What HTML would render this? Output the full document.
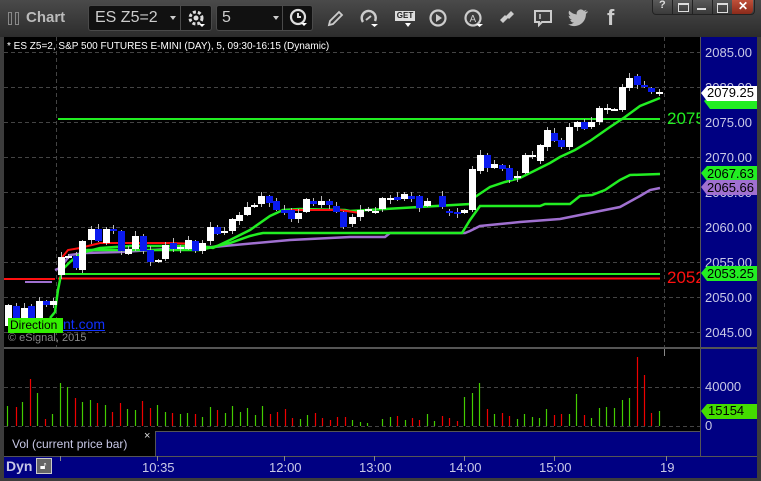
<!DOCTYPE html>
<html><head><meta charset="utf-8">
<style>
html,body{margin:0;padding:0;background:#3c3c3c;}
body{width:761px;height:481px;position:relative;overflow:hidden;font-family:"Liberation Sans",Arial,sans-serif;}
.abs{position:absolute;}
#tb{left:0;top:0;width:761px;height:37px;background:linear-gradient(#4a4a4a,#2c2c2c);}
.box{position:absolute;top:5px;height:26px;background:#111;border:1px solid #4a4a4a;border-radius:3px;box-sizing:border-box;}
.ax{color:#c8c8e6;font-size:13px;position:absolute;}
</style></head><body>
<div id="tb" class="abs">
  <div class="abs" style="left:8px;top:12px;width:4px;height:13px;border:1px solid #888;box-sizing:border-box"></div>
  <div class="abs" style="left:15px;top:12px;width:4px;height:13px;border:1px solid #888;box-sizing:border-box"></div>
  <div class="abs" style="left:26px;top:9px;color:#bbb;font-weight:bold;font-size:15px">Chart</div>
  <div class="box" style="left:88px;width:124px"></div>
  <div class="abs" style="left:180px;top:5px;width:1px;height:26px;background:#4a4a4a"></div>
  <div class="abs" style="left:95px;top:9px;color:#ccc;font-size:16px">ES Z5=2</div>
  <div class="abs" style="left:170px;top:16px;border:3px solid transparent;border-top:4px solid #ccc"></div>
  <svg class="abs" style="left:186px;top:8px" width="20" height="20" viewBox="0 0 20 20"><circle cx="10" cy="10" r="6" fill="none" stroke="#ddd" stroke-width="3" stroke-dasharray="3 2"/><circle cx="10" cy="10" r="2.5" fill="#ddd"/><path d="M13 16h6l-3 3z" fill="#fff"/></svg>
  <div class="box" style="left:216px;width:97px"></div>
  <div class="abs" style="left:282px;top:5px;width:1px;height:26px;background:#4a4a4a"></div>
  <div class="abs" style="left:222px;top:9px;color:#ccc;font-size:16px">5</div>
  <div class="abs" style="left:273px;top:16px;border:3px solid transparent;border-top:4px solid #ccc"></div>
  <svg class="abs" style="left:288px;top:8px" width="20" height="20" viewBox="0 0 20 20"><circle cx="10" cy="9" r="7" fill="none" stroke="#ddd" stroke-width="2.2"/><path d="M10 5v4h3" fill="none" stroke="#ddd" stroke-width="2"/><path d="M13 15h6l-3 3z" fill="#fff"/></svg>
  <svg class="abs" style="left:325px;top:8px" width="20" height="20" viewBox="0 0 20 20"><path d="M4 17l1-4 9-9 3 3-9 9z" fill="none" stroke="#ccc" stroke-width="1.8"/></svg>
  <svg class="abs" style="left:358px;top:7px" width="22" height="22" viewBox="0 0 22 22"><path d="M5 15A7 7 0 1 1 17 14" fill="none" stroke="#ccc" stroke-width="2.4"/><path d="M8 13l5-4" stroke="#ccc" stroke-width="2"/><path d="M13 17h7l-3.5 3z" fill="#fff"/></svg>
  <div class="abs" style="left:395px;top:11px;width:20px;height:10px;background:#ddd;color:#222;font-size:8px;font-weight:bold;line-height:10px;text-align:center">GET</div>
  <div class="abs" style="left:405px;top:23px;border:3px solid transparent;border-top:4px solid #fff"></div>
  <svg class="abs" style="left:428px;top:8px" width="20" height="20" viewBox="0 0 20 20"><circle cx="10" cy="10" r="7.5" fill="none" stroke="#ccc" stroke-width="2.2"/><path d="M8 6v8l6-4z" fill="#ccc"/></svg>
  <svg class="abs" style="left:463px;top:7px" width="22" height="22" viewBox="0 0 22 22"><circle cx="10" cy="11" r="7.5" fill="none" stroke="#ccc" stroke-width="2.2"/><text x="6.5" y="15" font-size="10" fill="#ccc" font-family="Liberation Sans">A</text><path d="M13 17h7l-3.5 3z" fill="#fff"/></svg>
  <svg class="abs" style="left:497px;top:8px" width="20" height="20" viewBox="0 0 20 20"><path d="M3 12l5-5 3 3-5 5zM9 8l5-5 3 3-5 5z" fill="#ccc"/></svg>
  <svg class="abs" style="left:533px;top:8px" width="20" height="20" viewBox="0 0 20 20"><path d="M2 3h16v11h-9l-3 3v-3h-4z" fill="none" stroke="#ccc" stroke-width="2"/><path d="M7 6v5" stroke="#ccc" stroke-width="1.5"/></svg>
  <svg class="abs" style="left:568px;top:9px" width="20" height="18" viewBox="0 0 24 20"><path d="M23 2c-1 .5-2 .7-3 .8 1-.6 2-1.6 2.2-2.7-1 .6-2 1-3.2 1.2A5 5 0 0 0 10.5 5.8 14 14 0 0 1 1.5 1.2a5 5 0 0 0 1.5 6.6c-.8 0-1.6-.3-2.2-.6 0 2.4 1.7 4.4 4 4.9-.7.2-1.500.2-2.2.1a5 5 0 0 0 4.600 3.4A10 10 0 0 1 0 17.5 14 14 0 0 0 7.5 19.7c9 0 14-7.5 14-14v-.6c1-.7 1.8-1.6 2.5-2.6z" fill="#bbb"/></svg>
  <div class="abs" style="left:607px;top:5px;color:#ccc;font-weight:bold;font-size:22px;font-family:'Liberation Sans'">f</div>
  <div class="abs" style="left:652px;top:0px;width:101px;height:14px;background:linear-gradient(#5a5a5a,#3a3a3a);border:1px solid #222;border-top:none;border-radius:0 0 4px 4px"></div>
  <div class="abs" style="left:659px;top:-1px;color:#ddd;font-size:11px;font-weight:bold">?</div>
  <div class="abs" style="left:672px;top:0;width:1px;height:14px;background:#222"></div>
  <div class="abs" style="left:678px;top:3px;width:9px;height:6px;border:1px solid #ddd;border-top-width:2px"></div>
  <div class="abs" style="left:692px;top:0;width:1px;height:14px;background:#222"></div>
  <div class="abs" style="left:697px;top:8px;width:9px;height:2px;background:#ddd"></div>
  <div class="abs" style="left:712px;top:0;width:1px;height:14px;background:#222"></div>
  <div class="abs" style="left:717px;top:3px;width:9px;height:7px;border:1px solid #ddd;border-top-width:2px"></div>
  <div class="abs" style="left:732px;top:0;width:21px;height:14px;background:linear-gradient(#c0503a,#8a2a1a);border-radius:0 0 4px 0"></div>
  <div class="abs" style="left:738px;top:-1px;color:#fff;font-size:12px;font-weight:bold">✕</div>
</div>

<div class="abs" style="left:4px;top:37px;width:696px;height:310px;background:#000"></div>
<div class="abs" style="left:700px;top:37px;width:57px;height:441px;background:#000082"></div>
<div class="abs" style="left:4px;top:347px;width:753px;height:2px;background:#555"></div>
<div class="abs" style="left:4px;top:349px;width:696px;height:82px;background:#000"></div>
<div class="abs" style="left:4px;top:431px;width:151px;height:25px;background:#000"></div>
<div class="abs" style="left:155px;top:431px;width:545px;height:25px;background:#000082;border-top:1px solid #555;border-left:1px solid #555;box-sizing:border-box"></div>
<div class="abs" style="left:4px;top:456px;width:753px;height:22px;background:#000082;border-top:1px solid #555;box-sizing:border-box"></div>
<div class="abs" style="left:700px;top:37px;width:1px;height:419px;background:#555"></div>

<svg id="ch" class="abs" style="left:0;top:0" width="761" height="481"></svg>

<div class="abs" style="left:7px;top:41px;color:#fff;font-size:10px">* ES Z5=2, S&amp;P 500 FUTURES E-MINI (DAY), 5, 09:30-16:15 (Dynamic)</div>
<div class="abs" style="left:8px;top:318px;width:55px;height:15px;background:#33ee00"></div>
<div class="abs" style="left:10px;top:318px;color:#000;font-size:12px">Direction</div>
<div class="abs" style="left:63px;top:316px;color:#1030ff;font-size:14px;text-decoration:underline">nt.com</div>
<div class="abs" style="left:8px;top:332px;color:#888;font-size:11px">© eSignal, 2015</div>
<div class="abs" style="left:667px;top:109px;width:33px;overflow:hidden;color:#22ee22;font-size:17px;white-space:nowrap">2075</div>
<div class="abs" style="left:667px;top:268px;width:33px;overflow:hidden;color:#ff1010;font-size:17px;white-space:nowrap">2052</div>

<div class="ax" style="left:705px;top:45px">2085.00</div>
<div class="ax" style="left:705px;top:80px">2080.00</div>
<div class="ax" style="left:705px;top:115px">2075.00</div>
<div class="ax" style="left:705px;top:150px">2070.00</div>
<div class="ax" style="left:705px;top:185px">2065.00</div>
<div class="ax" style="left:705px;top:220px">2060.00</div>
<div class="ax" style="left:705px;top:255px">2055.00</div>
<div class="ax" style="left:705px;top:290px">2050.00</div>
<div class="ax" style="left:705px;top:325px">2045.00</div>

<svg class="abs" style="left:700px;top:80px" width="57" height="120">
 <path d="M4 21l6-6h47v14h-47z" fill="#22ee22"/>
 <path d="M1 13l6-7h50v15h-50z" fill="#fff"/>
 <path d="M1 93l6-7h50v15h-50z" fill="#22ee22"/>
 <path d="M1 107l6-7h50v15h-50z" fill="#a070d0"/>
</svg>
<div class="abs" style="left:707px;top:85px;color:#000;font-size:13px">2079.25</div>
<div class="abs" style="left:707px;top:166px;color:#000;font-size:13px">2067.63</div>
<div class="abs" style="left:707px;top:180px;color:#000;font-size:13px">2065.66</div>
<svg class="abs" style="left:700px;top:265px" width="57" height="16"><path d="M1 8l6-7h50v15h-50z" fill="#22ee22"/></svg>
<div class="abs" style="left:707px;top:266px;color:#000;font-size:13px">2053.25</div>

<div class="ax" style="left:705px;top:379px">40000</div>
<div class="ax" style="left:705px;top:418px">0</div>
<svg class="abs" style="left:700px;top:403px" width="57" height="16"><path d="M1 8l6-7h50v15h-50z" fill="#44dd00"/></svg>
<div class="abs" style="left:708px;top:403px;color:#000;font-size:13px">15154</div>

<div class="abs" style="left:12px;top:437px;color:#c8c8e6;font-size:12px">Vol (current price bar)</div>
<div class="abs" style="left:144px;top:430px;color:#ddd;font-size:11px">×</div>

<div class="abs" style="left:6px;top:458px;color:#c8c8e6;font-size:14px;font-weight:bold">Dyn</div>
<div class="abs" style="left:36px;top:458px;width:16px;height:16px;background:#666;border:1px solid #ccc;box-sizing:border-box"></div>
<div class="abs" style="left:40px;top:461px;color:#fff;font-size:10px">🔓︎</div>
<div class="ax" style="left:142px;top:460px">10:35</div>
<div class="ax" style="left:269px;top:460px">12:00</div>
<div class="ax" style="left:359px;top:460px">13:00</div>
<div class="ax" style="left:449px;top:460px">14:00</div>
<div class="ax" style="left:539px;top:460px">15:00</div>
<div class="ax" style="left:660px;top:460px">19</div>

<script>
var s=document.getElementById('ch'),h='';
function L(x1,y1,x2,y2,c,w,d){h+='<line x1="'+x1+'" y1="'+y1+'" x2="'+x2+'" y2="'+y2+'" stroke="'+c+'" stroke-width="'+(w||1)+'"'+(d?' stroke-dasharray="'+d+'"':'')+'/>';}
for(var y=52;y<=332;y+=35)L(4,y+.5,700,y+.5,'#444',1,'4 3');
L(4,387.5,700,387.5,'#444',1,'4 3');L(4,426.5,700,426.5,'#444',1,'4 3');
L(56.5,37,56.5,347,'#444',1,'4 3');L(664.5,37,664.5,347,'#444',1,'4 3');
L(664.5,349,664.5,356,'#888');
[60,157,284,374,464,554,666].forEach(function(x){L(x+.5,456,x+.5,461,'#888');});
function P(pts,c,w){h+='<polyline fill="none" stroke="'+c+'" stroke-width="'+w+'" points="'+pts+'"/>';}
P('4,279 55,279','#ff1010',2);
P('25,282 52,282','#a070d0',2);
P('58,274 660,274','#22ee22',2);
P('58,278.5 660,278.5','#ff1010',2);
P('58,119 660,119','#22ee22',2);
P('55,270 60,268 70,255 85,253 120,252 200,247 213,247 290,240 350,237 385,237 390,233 465,233 470,231 480,226 500,224 520,222 560,219 590,213 620,207 640,196 650,190 660,188','#a070d0',2.5);
P('50,318 55,312 58,290 62,270 70,262 85,250 200,250 230,243 250,236 258,234 263,233 350,233 462,233 470,220 480,206 540,206 545,204 570,204 580,196 592,195 605,190 620,180 630,175 660,174','#22ee22',2.5);
P('60,260 68,250 80,248 100,243 170,243 200,244','#ff1010',2);
P('85,252 100,248 130,246 200,246 213,248 230,240 250,230 270,216 283,210 300,209 345,210 350,211 470,204 475,197 490,187 505,182 520,178 540,168 550,163 560,157 575,150 590,141 610,127 625,117 640,106 660,98','#22ee22',2.5);
P('290,210 340,210 360,213','#ff1010',2);
var C=[[8,305,326,'w'],[16,306,322,'b'],[24,308,322,'w'],[31,306,321,'b'],[39,301,320,'w'],[46,301,305,'b'],[53,301,305,'w'],[61,257,275,'w'],[68,256,258,'w'],[76,256,268,'b'],[82,241,270,'w'],[91,229,240,'w'],[98,229,241,'b'],[106,229,243,'w'],[113,229,231,'b'],[121,231,251,'b'],[128,249,254,'w'],[135,236,249,'w'],[143,236,251,'b'],[150,250,262,'b'],[158,260,262,'w'],[165,245,259,'w'],[173,243,249,'b'],[180,247,249,'w'],[188,240,249,'w'],[195,241,251,'b'],[202,243,251,'w'],[210,227,241,'w'],[217,227,234,'b'],[224,231,233,'w'],[232,219,231,'w'],[239,215,221,'w'],[247,207,215,'w'],[254,205,206,'w'],[261,196,204,'w'],[269,196,203,'b'],[276,201,210,'b'],[284,210,213,'b'],[291,210,219,'b'],[298,213,219,'w'],[306,199,212,'w'],[313,201,204,'b'],[321,201,205,'w'],[329,201,205,'b'],[336,206,212,'b'],[343,212,227,'b'],[352,217,224,'w'],[360,210,217,'w'],[368,209,211,'w'],[375,211,212,'w'],[382,198,209,'w'],[390,198,200,'w'],[397,197,200,'b'],[404,194,199,'w'],[411,196,199,'b'],[419,196,208,'b'],[427,201,206,'w'],[442,196,207,'b'],[449,211,213,'b'],[457,212,214,'b'],[464,210,213,'w'],[472,169,210,'w'],[480,155,171,'w'],[487,155,168,'b'],[494,164,168,'w'],[502,165,169,'b'],[509,168,180,'b'],[517,176,178,'w'],[525,155,173,'w'],[532,155,157,'w'],[540,145,161,'w'],[547,130,147,'w'],[554,133,141,'b'],[561,140,147,'b'],[569,127,147,'w'],[577,122,127,'w'],[584,122,129,'b'],[591,122,127,'w'],[599,108,122,'w'],[607,108,110,'w'],[614,109,110,'w'],[622,87,110,'w'],[629,78,88,'w'],[637,76,85,'b'],[644,85,87,'b'],[651,88,92,'b'],[659,92,93,'w']];
C.forEach(function(c,i){var x=c[0],t=c[1],b=c[2],col=c[3]=='w'?'#fff':'#0a1aee';var ex=1+((i*7)%5);L(x+.5,t-ex,x+.5,b+((i*5)%4)+1,'#bbb');
h+='<rect x="'+(x-3)+'" y="'+t+'" width="7" height="'+Math.max(2,b-t)+'" fill="'+col+'"/>';});
var V=[[7,406,'g'],[16,407,'r'],[22,402,'g'],[30,379,'r'],[37,393,'g'],[45,419,'r'],[52,414,'g'],[60,383,'g'],[67,387,'g'],[75,398,'r'],[82,402,'g'],[90,400,'g'],[97,403,'r'],[105,405,'g'],[112,412,'r'],[120,403,'r'],[127,409,'g'],[135,410,'g'],[142,401,'r'],[150,408,'r'],[157,405,'g'],[165,412,'g'],[172,413,'r'],[180,414,'g'],[187,413,'g'],[195,414,'r'],[202,417,'g'],[210,407,'g'],[217,410,'r'],[225,413,'g'],[232,406,'g'],[240,412,'g'],[247,408,'g'],[255,415,'g'],[262,406,'g'],[270,414,'r'],[277,412,'r'],[285,409,'r'],[292,418,'r'],[300,419,'g'],[307,415,'g'],[315,413,'r'],[322,418,'r'],[330,420,'r'],[337,417,'r'],[345,417,'r'],[352,420,'g'],[360,422,'g'],[367,423,'g'],[382,419,'g'],[390,417,'g'],[397,416,'r'],[405,420,'g'],[412,418,'r'],[419,420,'r'],[427,414,'g'],[434,421,'g'],[442,416,'r'],[449,418,'r'],[457,421,'r'],[464,397,'g'],[472,393,'g'],[479,383,'g'],[487,409,'r'],[494,414,'g'],[502,413,'r'],[509,416,'r'],[517,419,'g'],[524,414,'g'],[532,417,'g'],[539,418,'g'],[546,409,'g'],[554,415,'r'],[561,414,'r'],[569,414,'g'],[576,394,'g'],[584,415,'r'],[591,418,'g'],[599,408,'g'],[606,407,'g'],[614,408,'g'],[622,400,'g'],[629,398,'g'],[637,357,'r'],[644,375,'r'],[651,413,'r'],[659,411,'g']];
V.forEach(function(v){L(v[0]+.5,v[1],v[0]+.5,426,v[2]=='g'?'#44cc00':'#ee0000',1.2);});
s.innerHTML=h;
</script>
</body></html>
